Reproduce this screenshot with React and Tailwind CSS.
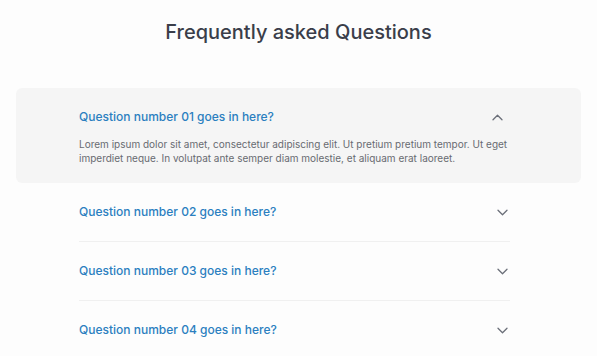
import React from 'react';

const questions = [
  'Question number 02 goes in here?',
  'Question number 03 goes in here?',
  'Question number 04 goes in here?',
];

function Chevron({ up }) {
  return (
    <svg width="11" height="7" viewBox="0 0 11 7" fill="none" className="shrink-0">
      <path
        d={up ? 'M1 5.8 5.5 1.3 10 5.8' : 'M1 1.2 5.5 5.7 10 1.2'}
        stroke="#6b6f79"
        strokeWidth="1.3"
        strokeLinecap="round"
        strokeLinejoin="round"
      />
    </svg>
  );
}

export default function App() {
  return (
    <div className="w-full h-[356px] overflow-hidden bg-[#fdfdfd] font-['Inter',sans-serif]">
      <h2 className="pt-[19px] text-center text-[20px] leading-[26px] font-medium text-[#3a3e4a]">
        Frequently asked Questions
      </h2>

      <div className="mx-[16px] mt-[43px]">
        {/* Open item */}
        <div className="rounded-md bg-[#f5f5f5] pl-[63px] pr-[71px] pt-[21px] pb-[18px]">
          <button className="w-full flex items-center justify-between text-left">
            <span className="text-[12px] leading-4 font-medium text-[#2b7fc0]">
              Question number 01 goes in here?
            </span>
            <span className="mr-[7px]">
              <Chevron up />
            </span>
          </button>
          <p className="mt-[12px] text-[10px] leading-[14px] text-[#686b71]">
            Lorem ipsum dolor sit amet, consectetur adipiscing elit. Ut pretium pretium tempor. Ut eget imperdiet neque. In volutpat ante semper diam molestie, et aliquam erat laoreet.
          </p>
        </div>

        {/* Closed items */}
        <div className="pl-[63px] pr-[71px]">
          {questions.map((q) => (
            <div key={q} className="border-b border-[#f0f0f0] pt-[21px] pb-[21px]">
              <button className="w-full flex items-center justify-between text-left">
                <span className="text-[12px] leading-4 font-medium text-[#2b7fc0]">{q}</span>
                <span className="mr-[2px]">
                  <Chevron />
                </span>
              </button>
            </div>
          ))}
        </div>
      </div>
    </div>
  );
}
